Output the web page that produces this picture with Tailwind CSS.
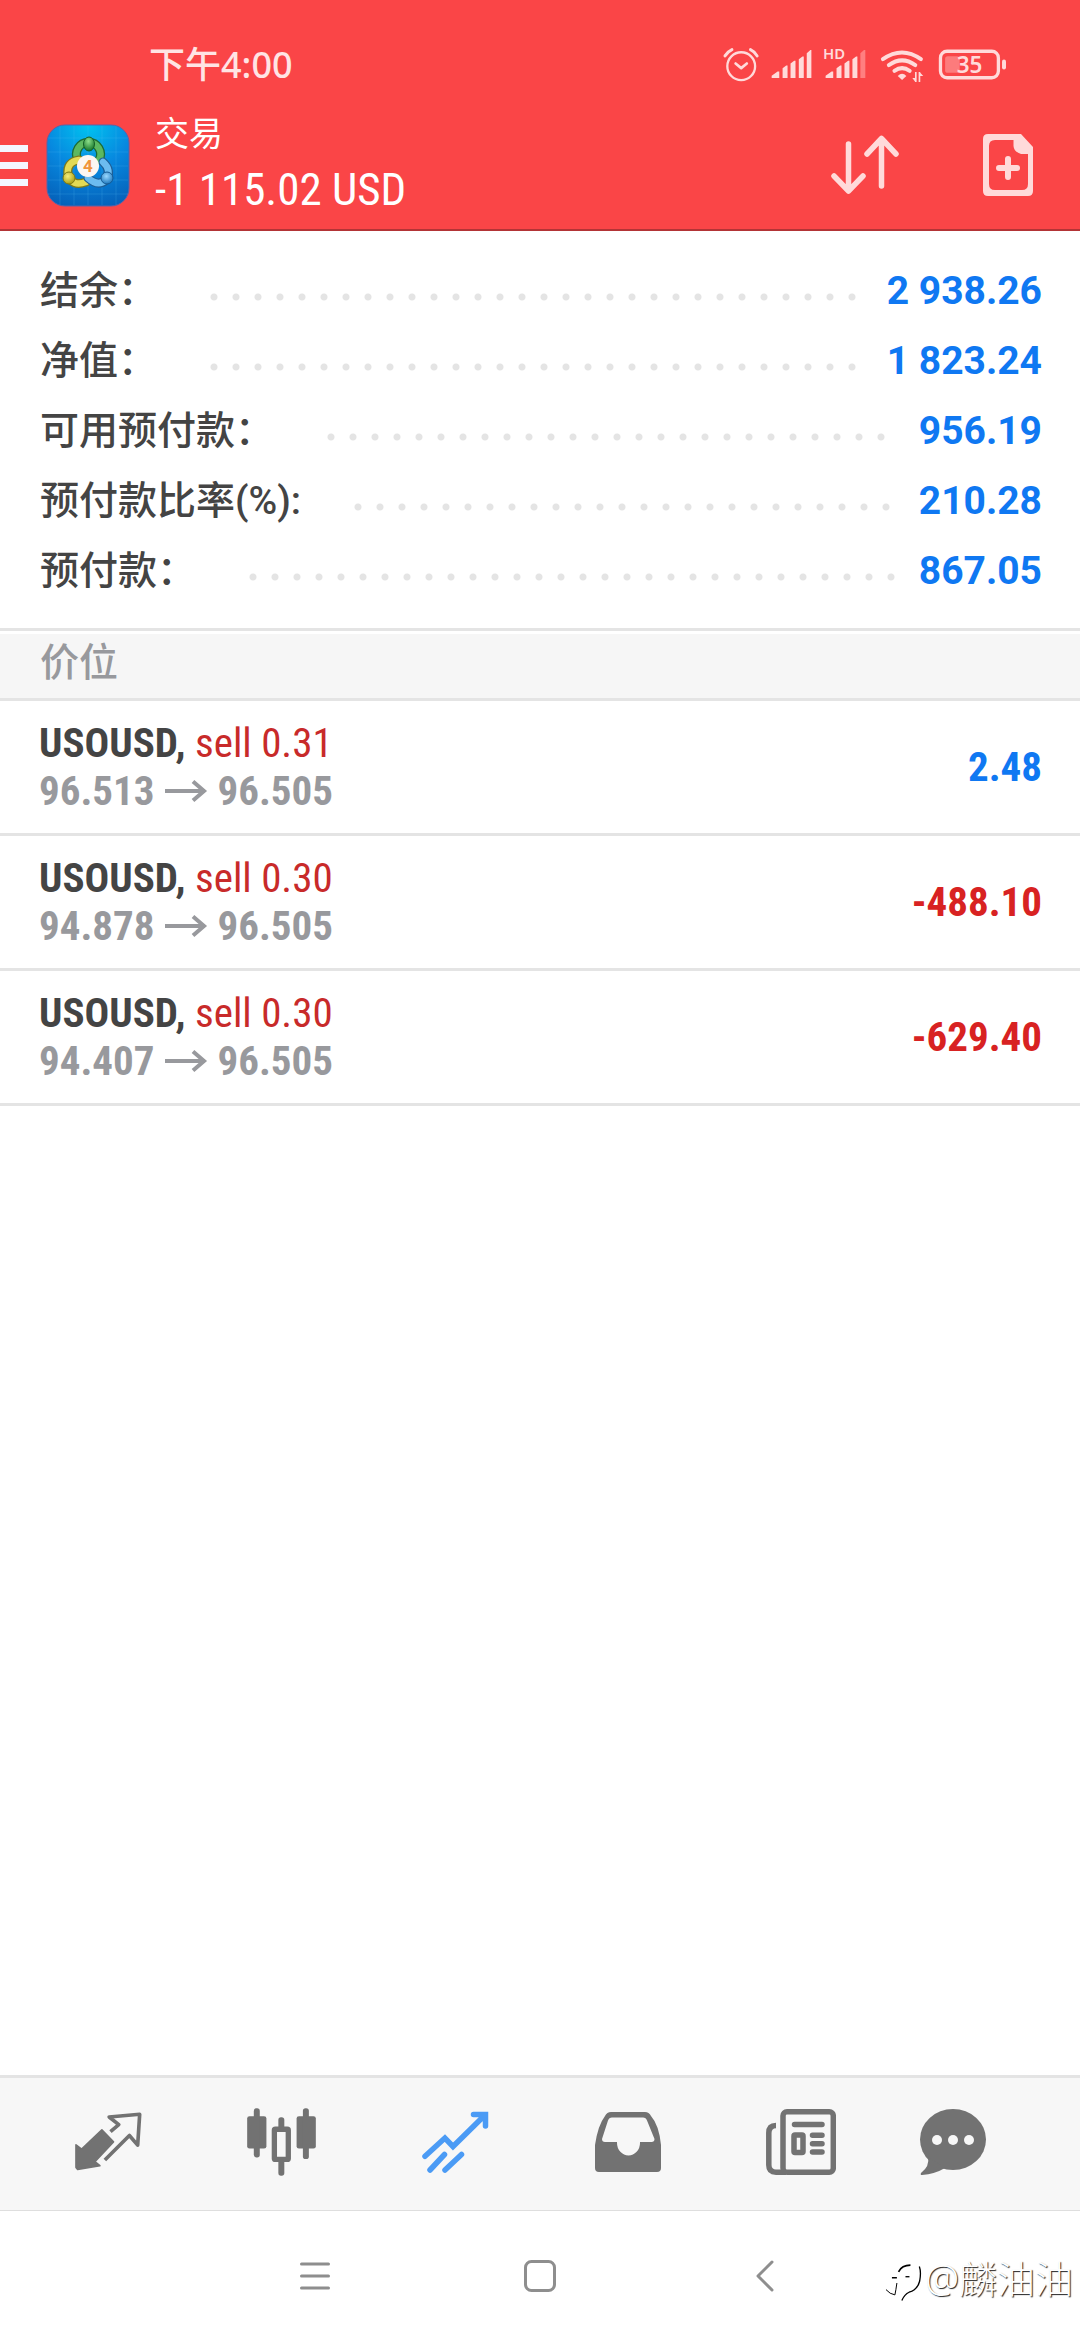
<!DOCTYPE html>
<html lang="zh-CN">
<head>
<meta charset="utf-8">
<meta name="viewport" content="width=device-width, initial-scale=1">
<title>交易</title>
<script src="https://cdn.jsdelivr.net/npm/@tailwindcss/browser@4"></script>
</head>
<body class="relative flex min-h-screen flex-col bg-white font-['Roboto_Condensed','Noto_Sans_CJK_SC',sans-serif] text-[#444]">

<header class="border-b-2 border-[#b33436] bg-[#fa4547] text-white">
  <div class="flex h-[101px] items-center justify-between pt-[28px] pr-[72px] pl-[149px]">
    <time class="font-['Noto_Sans','Noto_Sans_CJK_SC',sans-serif] text-[36px] leading-[40px] font-medium text-[#ffe4e4]">下午4:00</time>
    <svg class="h-[47px] w-[286px]" viewBox="18 16 858 142" fill="none" stroke="#ffdada" stroke-linecap="round" stroke-linejoin="round" role="img" aria-label="状态">
      <circle cx="73" cy="92" r="42" stroke-width="7"/>
      <path d="M24 61Q32 48 45 42M101 42Q114 48 121 61" stroke-width="9"/>
      <path d="M56 84l17 14 17-14" stroke-width="8"/>
      <g fill="#ffdada" stroke="none">
        <path d="M165 128v-7l18-13h5v20zM198 128V98l11-8h4v38zM222 128V84l11-8h4v52zM247 128V71l11-8h4v65zM271 128V53l11-10h3v85z"/>
        <path d="M328 128v-7l18-13h5v20zM361 128V98l11-8h4v38zM385 128V84l11-8h4v52zM409 128V71l11-8h4v65z"/>
        <path d="M433 128V53l11-10h4v85z" fill="#ff7f80"/>
        <text x="320" y="71" font-size="45" font-weight="600" font-family="Noto Sans, sans-serif">HD</text>
        <path d="M546 122Q559 108 572 122L559 134z"/>
        <path d="M598 110h5v30h-5zM590 128h8v10zM609 110h5v30h-5zM614 112l9 10h-9z"/>
        <rect x="689" y="62" width="44" height="50" rx="8" fill="#fd7b7c"/>
        <rect x="861" y="72" width="12" height="30" rx="6"/>
        <text x="724" y="113" font-size="68" font-weight="600" font-family="Noto Sans, sans-serif">35</text>
      </g>
      <path d="M501 71Q559 30 616 71M519 89Q559 60 599 89M536 106Q559 90 582 106" stroke-width="12"/>
      <rect x="675" y="47" width="175" height="80" rx="20" stroke-width="10"/>
    </svg>
  </div>
  <div class="flex h-[128px] items-center pr-[47px]">
    <button class="w-[28px]" aria-label="菜单">
      <svg class="block h-[41px] w-[28px]" viewBox="0 0 28 41" fill="#f4f6ff"><path d="M0 0h28v7H0zM0 17h28v7H0zM0 34h28v7H0z"/></svg>
    </button>
    <svg class="ml-[18px] h-[83px] w-[84px]" viewBox="0 0 84 83" role="img" aria-label="MetaTrader 4">
      <defs>
        <radialGradient id="bg" cx="50%" cy="0%" r="105%"><stop offset="0" stop-color="#00c4f0"/><stop offset=".5" stop-color="#0788df"/><stop offset="1" stop-color="#0560b8"/></radialGradient>
        <radialGradient id="gr" cx="45%" cy="30%" r="70%"><stop offset="0" stop-color="#8fe08a"/><stop offset="1" stop-color="#14752b"/></radialGradient>
        <radialGradient id="ye" cx="40%" cy="35%" r="70%"><stop offset="0" stop-color="#f7ee7a"/><stop offset="1" stop-color="#a59a10"/></radialGradient>
        <radialGradient id="bl" cx="45%" cy="35%" r="70%"><stop offset="0" stop-color="#9ad8ff"/><stop offset="1" stop-color="#1470b8"/></radialGradient>
      </defs>
      <rect x="1" y="1" width="82" height="81" rx="18" fill="url(#bg)" stroke="#5a62a8"/>
      <path d="M14 2v79M28 2v79M42 2v79M56 2v79M70 2v79M2 14h80M2 28h80M2 42h80M2 56h80M2 70h80" stroke="#5cc4f5" stroke-opacity=".2"/>
      <g fill="none" stroke-linecap="round">
        <path d="M32 36A12 12 0 1 1 53 36" stroke="#1c6b35" stroke-width="9"/>
        <path d="M32 36A12 12 0 1 1 53 36" stroke="#5cb860" stroke-width="6.500"/>
        <path d="M33 36Q20 38 22 51 26 63 40 58" stroke="#7d7a1c" stroke-width="9"/>
        <path d="M33 36Q20 38 22 51 26 63 40 58" stroke="#e3da55" stroke-width="6.500"/>
        <path d="M57 38Q66 46 60 56 52 63 42 54" stroke="#1f5f96" stroke-width="9"/>
        <path d="M57 38Q66 46 60 56 52 63 42 54" stroke="#6cbcf0" stroke-width="6.500"/>
      </g>
      <ellipse cx="43" cy="20" rx="5.500" ry="7" fill="url(#gr)" stroke="#145f26"/>
      <ellipse cx="23" cy="54" rx="6" ry="6" fill="url(#ye)" stroke="#807810"/>
      <ellipse cx="61" cy="54" rx="6" ry="6" fill="url(#bl)" stroke="#155a94"/>
      <circle cx="42" cy="42" r="11" fill="#fbf6f2"/>
      <text x="42" y="48" text-anchor="middle" font-size="17" font-weight="700" font-family="Roboto, sans-serif" fill="#f0943a">4</text>
    </svg>
    <div class="ml-[25px] flex-1">
      <h1 class="text-[34px] leading-[50px]">交易</h1>
      <p class="text-[45px] leading-[62px]">-1 115.02 USD</p>
    </div>
    <button aria-label="排序">
      <svg class="block h-[60px] w-[68px]" viewBox="291 135 68 60" fill="none" stroke="#ffdada" stroke-width="5.5" stroke-linecap="round" stroke-linejoin="round"><path d="M308.5 144v47M294 176l14.500 15 14.500-15M341.500 186v-47M327 154l14.500-15.500L356 154"/></svg>
    </button>
    <button class="ml-[84px]" aria-label="新订单">
      <svg class="block h-[62px] w-[50px]" viewBox="0 0 50 62" fill="#ffdada"><path fill-rule="evenodd" d="M5 0H38L50 13V57q0 5-5 5H5q-5 0-5-5V5q0-5 5-5zM12 6q-6 0-6 6V50q0 6 6 6H39q6 0 6-6V20H38Q31 18 30.500 12V6z"/><path d="M16 34h18M25 25v18" stroke="#ffdada" stroke-width="6" stroke-linecap="round"/></svg>
    </button>
  </div>
</header>

<main class="flex-1">
  <dl class="border-b-3 border-[#e4e4e4] pt-[25px] pr-[38px] pb-[22px] pl-[40px] font-['Roboto','Noto_Sans_CJK_SC',sans-serif] text-[39px] leading-[70px] font-medium">
    <div class="flex h-[70px]"><dt>结余：</dt><span class="mt-[37px] mr-[22px] ml-[53px] h-[8px] flex-1 bg-[radial-gradient(circle_at_4px_4px,#e4e4e4_3px,transparent_4px)] bg-[length:22px_8px] bg-repeat-x"></span><dd class="font-bold text-[#0f78f2]">2 938.26</dd></div>
    <div class="flex h-[70px]"><dt>净值：</dt><span class="mt-[37px] mr-[22px] ml-[53px] h-[8px] flex-1 bg-[radial-gradient(circle_at_4px_4px,#e4e4e4_3px,transparent_4px)] bg-[length:22px_8px] bg-repeat-x"></span><dd class="font-bold text-[#0f78f2]">1 823.24</dd></div>
    <div class="flex h-[70px]"><dt>可用预付款：</dt><span class="mt-[37px] mr-[22px] ml-[53px] h-[8px] flex-1 bg-[radial-gradient(circle_at_4px_4px,#e4e4e4_3px,transparent_4px)] bg-[length:22px_8px] bg-repeat-x"></span><dd class="font-bold text-[#0f78f2]">956.19</dd></div>
    <div class="flex h-[70px]"><dt>预付款比率(%):</dt><span class="mt-[37px] mr-[22px] ml-[53px] h-[8px] flex-1 bg-[radial-gradient(circle_at_4px_4px,#e4e4e4_3px,transparent_4px)] bg-[length:22px_8px] bg-repeat-x"></span><dd class="font-bold text-[#0f78f2]">210.28</dd></div>
    <div class="flex h-[70px]"><dt>预付款：</dt><span class="mt-[37px] mr-[22px] ml-[53px] h-[8px] flex-1 bg-[radial-gradient(circle_at_4px_4px,#e4e4e4_3px,transparent_4px)] bg-[length:22px_8px] bg-repeat-x"></span><dd class="font-bold text-[#0f78f2]">867.05</dd></div>
  </dl>

  <h2 class="mt-[3px] border-b-3 border-[#e4e4e4] bg-[#f6f6f6] px-[40px] pt-[2px] pb-[8px] text-[39px] leading-[54px] font-medium text-[#98999d]">价位</h2>
  <ul class="text-[41px] leading-[48px]">
    <li class="flex h-[135px] items-center justify-between border-b-3 border-[#e4e4e4] pr-[38px] pl-[39px]">
      <div>
        <p><span class="font-bold">USOUSD,</span> <span class="text-[#c82a2a]">sell 0.31</span></p>
        <p class="flex items-center font-bold text-[#98999d]">96.513<svg class="mx-[10px] h-[22px] w-[43px]" viewBox="0 0 43 22" fill="none" stroke="#98999d" stroke-width="4" role="img" aria-label="至"><path d="M0 11h39M28 1.500L39 11 28 20.500"/></svg>96.505</p>
      </div>
      <strong class="text-[#0f78f2]">2.48</strong>
    </li>
    <li class="flex h-[135px] items-center justify-between border-b-3 border-[#e4e4e4] pr-[38px] pl-[39px]">
      <div>
        <p><span class="font-bold">USOUSD,</span> <span class="text-[#c82a2a]">sell 0.30</span></p>
        <p class="flex items-center font-bold text-[#98999d]">94.878<svg class="mx-[10px] h-[22px] w-[43px]" viewBox="0 0 43 22" fill="none" stroke="#98999d" stroke-width="4" role="img" aria-label="至"><path d="M0 11h39M28 1.500L39 11 28 20.500"/></svg>96.505</p>
      </div>
      <strong class="text-[#d82222]">-488.10</strong>
    </li>
    <li class="flex h-[135px] items-center justify-between border-b-3 border-[#e4e4e4] pr-[38px] pl-[39px]">
      <div>
        <p><span class="font-bold">USOUSD,</span> <span class="text-[#c82a2a]">sell 0.30</span></p>
        <p class="flex items-center font-bold text-[#98999d]">94.407<svg class="mx-[10px] h-[22px] w-[43px]" viewBox="0 0 43 22" fill="none" stroke="#98999d" stroke-width="4" role="img" aria-label="至"><path d="M0 11h39M28 1.500L39 11 28 20.500"/></svg>96.505</p>
      </div>
      <strong class="text-[#d82222]">-629.40</strong>
    </li>
  </ul>
</main>

<nav class="grid h-[136px] grid-cols-[repeat(5,4fr)_3fr] items-center justify-items-center border-t-3 border-b border-t-[#e4e4e4] border-b-[#dedede] bg-[#f7f7f7] pr-[62px] pb-[5px] pl-[22px] text-[#727272]">
  <button aria-label="行情"><svg class="block h-[59px] w-[67px]" viewBox="16 54 202 176" fill="none" stroke="currentColor" stroke-linejoin="round"><path d="M19 152L36 165 97 107 132 143 76 203 91 215 24 226 19 220z" fill="currentColor" stroke-width="5"/><path d="M123 112L148 91 119 68 211 60 205 153 180 124 106 198" stroke-width="11"/></svg></button>
  <button aria-label="图表"><svg class="block h-[68px] w-[69px]" viewBox="530 38 207 205" fill="currentColor"><rect x="530" y="63" width="58" height="97" rx="7"/><rect x="550" y="39" width="18" height="148" rx="8"/><rect x="679" y="63" width="58" height="97" rx="7"/><rect x="698" y="39" width="18" height="153" rx="8"/><rect x="624" y="66" width="18" height="40" rx="8"/><rect x="624" y="190" width="18" height="52" rx="8"/><rect x="612" y="102" width="42" height="91" rx="3" fill="none" stroke="currentColor" stroke-width="16"/></svg></button>
  <button aria-label="交易" aria-current="page" class="text-[#4b9bf5]"><svg class="block h-[62px] w-[67px]" viewBox="421 50 67 62" fill="none" stroke="currentColor" stroke-width="5.5" stroke-linecap="round"><path d="M424 95.300L443.900 77 452 85.500 484 54M472.500 53.500h12V65M429 109l14.500-15.500M444 109l16.500-15.500"/></svg></button>
  <button aria-label="历史"><svg class="block h-[60px] w-[67px]" viewBox="0 0 67 60" fill="currentColor"><path fill-rule="evenodd" d="M0 33Q3 13 10 4 12 0 16 0H50q4 0 6 4Q64 13 66 33V56q0 4-4 4H4q-4 0-4-4zM17 5.500q-3 0-4 3L7 27q0 3 3 3H22v1a11.500 12.500 0 0 0 23 0V30H56.500q3 0 3-3L52 8.500q-1-3-4-3z"/></svg></button>
  <button aria-label="新闻"><svg class="block h-[66px] w-[70px]" viewBox="0 0 70 66" fill="none" stroke="currentColor" stroke-width="5.500"><rect x="17" y="2.800" width="50.300" height="60.400" rx="4"/><path d="M10 16.500Q2.800 16.500 2.800 24V56Q2.800 63.200 10 63.200H20"/><rect x="28" y="26" width="9" height="17.500" rx="1"/><path d="M28.500 15.500H56M46.500 26.300H56M46.500 34.700H56M46.500 43H56" stroke-linecap="round"/></svg></button>
  <button aria-label="消息"><svg class="block h-[66px] w-[66px]" viewBox="0 0 66 66" fill="currentColor"><ellipse cx="33" cy="30.500" rx="33" ry="30.500"/><path d="M8 48Q10 57 1 64q-1 2 1 2Q15 65 25 59z"/><g fill="#f7f7f7"><circle cx="17" cy="31" r="5"/><circle cx="33" cy="31" r="5"/><circle cx="49" cy="31" r="5"/></g></svg></button>
</nav>

<footer class="grid h-[129px] grid-cols-3 items-center justify-items-center px-[18.7%]">
  <button aria-label="最近任务"><svg class="block h-[32px] w-[32px]" viewBox="0 0 32 32" stroke="#8e8e8e" stroke-width="3" stroke-linecap="round"><path d="M2.500 4h27M2.500 16h27M2.500 28h27"/></svg></button>
  <button aria-label="主屏幕"><svg class="block h-[32px] w-[32px]" viewBox="0 0 32 32" fill="none" stroke="#8e8e8e" stroke-width="3"><rect x="1.500" y="1.500" width="29" height="29" rx="6"/></svg></button>
  <button aria-label="返回"><svg class="block h-[32px] w-[18px]" viewBox="0 0 18 32" fill="none" stroke="#8e8e8e" stroke-width="3" stroke-linecap="round" stroke-linejoin="round"><path d="M16 2L2 16 16 30"/></svg></button>
</footer>

<div class="absolute right-[7px] bottom-[38px] flex items-center gap-[3px]">
  <svg class="mt-[8px] h-[40px] w-[37px]" viewBox="33 76 112 118" fill="none" stroke="#000" aria-hidden="true"><path d="M54 122H69M74 104Q84 84 110 84" stroke-width="5"/><path d="M137 88Q143 105 138 132 132 158 106 166 92 172 84 191" stroke-width="4"/><path d="M69 138Q66 160 63 174 48 172 36 158" stroke-width="3"/><path d="M95 119H107" stroke-width="4"/></svg>
  <span class="font-['Noto_Sans','Noto_Sans_CJK_SC',sans-serif] text-[38px] leading-[44px] font-light text-white [text-shadow:1px_1px_1px_#222]">@麟油油</span>
</div>
</body>
</html>
